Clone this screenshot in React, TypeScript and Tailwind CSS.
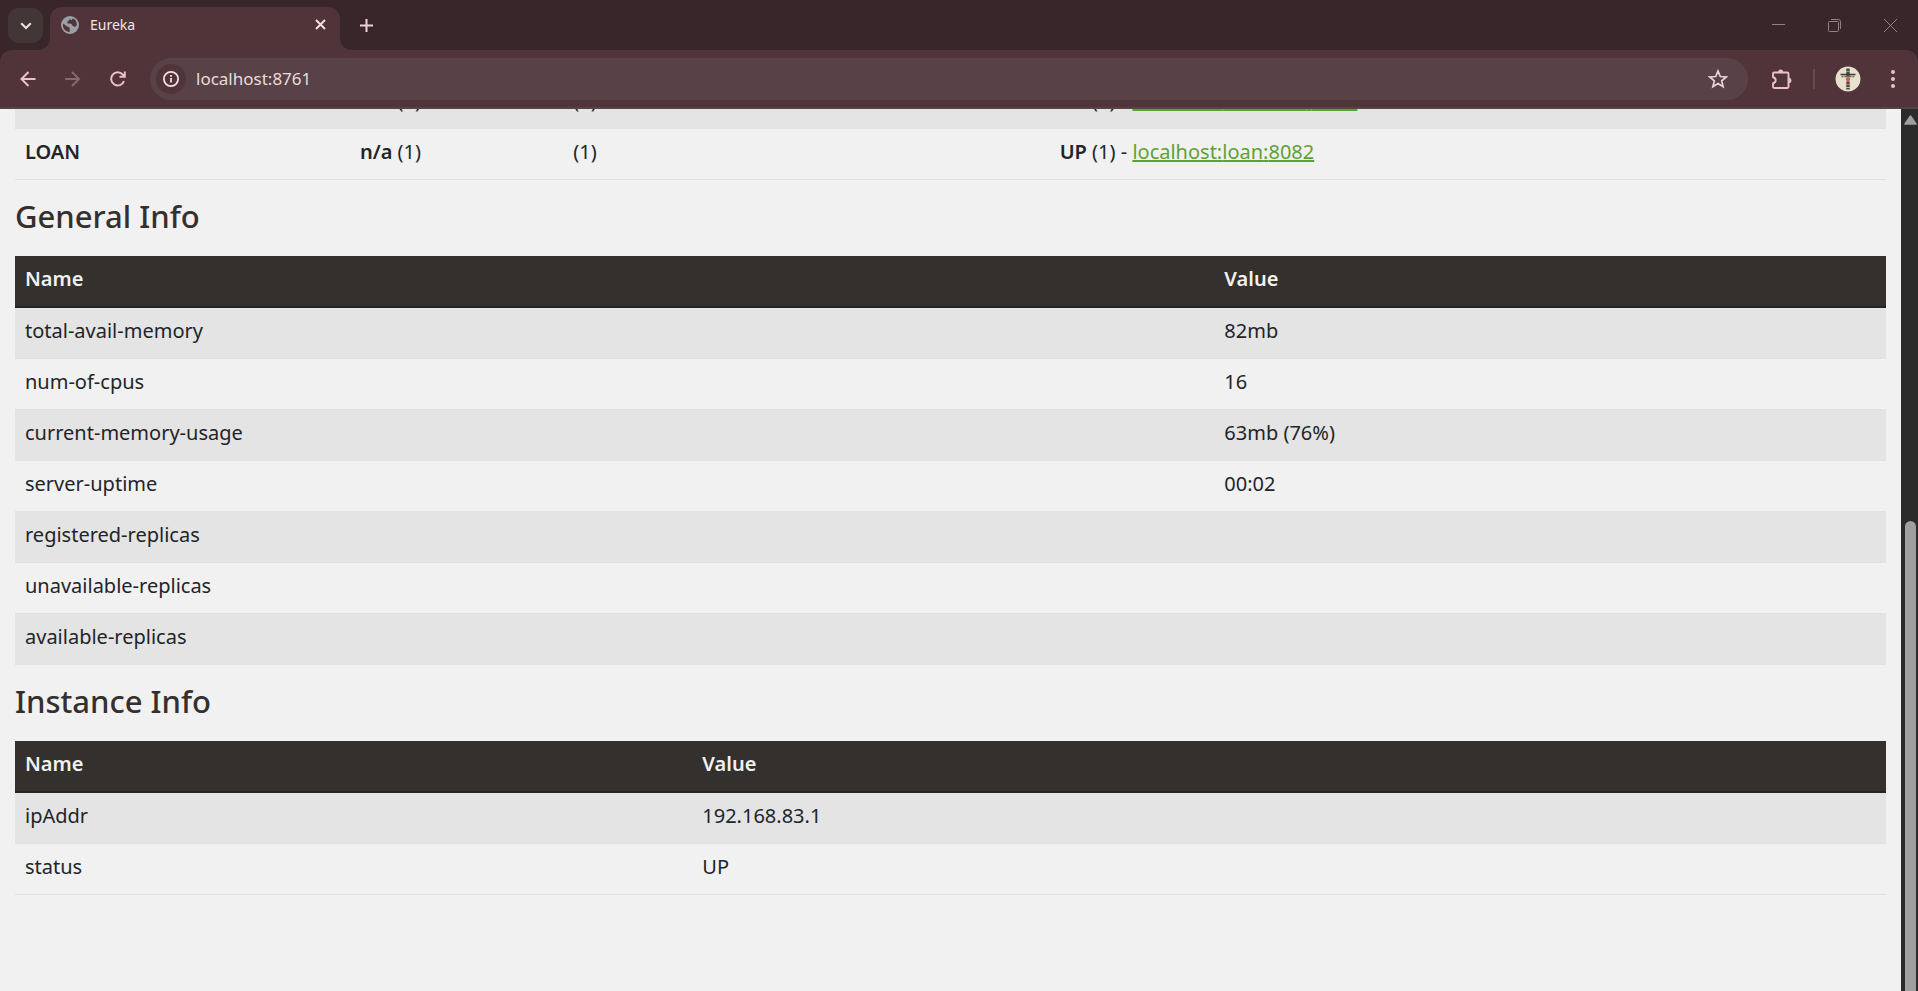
import type { ReactNode } from "react";

const generalInfo: [string, string][] = [
  ["total-avail-memory", "82mb"],
  ["num-of-cpus", "16"],
  ["current-memory-usage", "63mb (76%)"],
  ["server-uptime", "00:02"],
  ["registered-replicas", ""],
  ["unavailable-replicas", ""],
  ["available-replicas", ""],
];

const instanceInfo: [string, string][] = [
  ["ipAddr", "192.168.83.1"],
  ["status", "UP"],
];

function IconButton({ label, className = "", children }: { label: string; className?: string; children: ReactNode }) {
  return (
    <button type="button" aria-label={label} className={`flex shrink-0 items-center justify-center ${className}`}>
      {children}
    </button>
  );
}

function TabStrip() {
  return (
    <div className="flex h-[50px] items-end bg-[#38262a]">
      <div className="flex h-[50px] w-[50px] shrink-0 items-start pt-2 pl-2">
        <IconButton label="Search tabs" className="size-[35px] rounded-[11px] bg-[#433637]">
          <svg width="12" height="8" viewBox="0 0 12 8" fill="none" stroke="#f3dfe2" strokeWidth="2">
            <path d="M1.2 1.2 6 6l4.800-4.800" />
          </svg>
        </IconButton>
      </div>
      <div className="relative flex h-[43px] w-[290px] shrink-0 items-center rounded-t-xl bg-[#503439] pr-2 pb-2 pl-[11px]">
        <svg className="absolute bottom-0 -left-3" width="12" height="12" aria-hidden="true">
          <path d="M12 0v12H0A12 12 0 0 0 12 0Z" fill="#503439" />
        </svg>
        <svg className="absolute -right-3 bottom-0" width="12" height="12" aria-hidden="true">
          <path d="M0 0v12h12A12 12 0 0 1 0 0Z" fill="#503439" />
        </svg>
        <svg width="18" height="18" viewBox="0 0 18 18" aria-hidden="true">
          <circle cx="9" cy="9" r="9" fill="#9aa0a6" />
          <path d="M2 7.500l4.500 3.200c1.800.2 2.200 1 2.200 2v3.300C5 16 2 13 2 9.500ZM8 2.100c1 1 .5 2.400-1 2.900-.6.200 0 1.200-.8 1.600-.4.600.2 1 1.200.9 2.200-.1 3.600.5 4.100 2.200 1 .2 1.600.6 1.800 1.200.6.100 1.400-.3 2.500-1.600C16 5.500 14 3 11.500 2.500c.2 1-.5 1.800-1.500 1.500Z" fill="#503439" />
        </svg>
        <span className="ml-[11px] flex-1 text-[14px] text-[#f3e3e5]">Eureka</span>
        <IconButton label="Close tab" className="size-6">
          <svg width="11" height="11" viewBox="0 0 11 11" stroke="#f3dfe2" strokeWidth="2">
            <path d="m1 1 9 9M10 1l-9 9" />
          </svg>
        </IconButton>
      </div>
      <IconButton label="New tab" className="mb-3 ml-[13px] size-[26px]">
        <svg width="13" height="13" viewBox="0 0 13 13" stroke="#ecd3d8" strokeWidth="2">
          <path d="M6.500 0v13M0 6.500h13" />
        </svg>
      </IconButton>
      <div className="ml-auto flex h-[50px] items-center">
        <IconButton label="Minimize" className="h-[50px] w-14">
          <svg width="13" height="13" viewBox="0 0 13 13" stroke="#8f8284">
            <path d="M0 5.500h13" />
          </svg>
        </IconButton>
        <IconButton label="Restore" className="h-[50px] w-14">
          <svg width="13" height="13" viewBox="0 0 13 13" fill="none" stroke="#8f8284">
            <rect x=".5" y="2.500" width="10" height="10" rx="1" />
            <path d="M3 .5h7.500a2 2 0 0 1 2 2V10" />
          </svg>
        </IconButton>
        <IconButton label="Close" className="h-[50px] w-14">
          <svg width="13" height="13" viewBox="0 0 13 13" stroke="#8f8284">
            <path d="m0 0 13 13M13 0 0 13" />
          </svg>
        </IconButton>
      </div>
    </div>
  );
}

function Toolbar() {
  return (
    <div className="bg-[#38262a]">
      <div className="flex h-[59px] items-center rounded-t-xl border-b-2 border-[#584247] bg-[#503439]">
        <IconButton label="Back" className="ml-2 h-10 w-10">
          <svg width="16" height="16" viewBox="0 0 16 16" fill="none" stroke="#edbfc9" strokeWidth="2">
            <path d="M15.500 8H1.800M8.500 1l-7 7 7 7" />
          </svg>
        </IconButton>
        <IconButton label="Forward" className="ml-[5px] h-10 w-10">
          <svg width="16" height="16" viewBox="0 0 16 16" fill="none" stroke="#866870" strokeWidth="2">
            <path d="M0 8h13.700M7 1l7 7-7 7" />
          </svg>
        </IconButton>
        <IconButton label="Reload" className="ml-[5px] h-10 w-10">
          <svg width="16" height="16" viewBox="0 0 16 16" fill="none" stroke="#edbfc9" strokeWidth="2">
            <path d="M14 10.200A6.600 6.600 0 1 1 12.800 3.600l1.400 1.800M14.800.500v5.300H9.500" />
          </svg>
        </IconButton>
        <div className="ml-3 flex h-[42px] flex-1 items-center rounded-full bg-[#584247] pr-[18px] pl-[6px]">
          <IconButton label="View site information" className="size-[30px] rounded-full bg-[#503439]">
            <svg width="16" height="16" viewBox="0 0 16 16" fill="none" stroke="#f3dfe2" strokeWidth="1.800">
              <circle cx="8" cy="8" r="7.100" />
              <path d="M8 7v4.500M8 4v1.800" />
            </svg>
          </IconButton>
          <input
            aria-label="Address and search bar"
            defaultValue="localhost:8761"
            className="ml-[10px] min-w-0 flex-1 bg-transparent text-[17px] text-[#eadadd] outline-none"
          />
          <IconButton label="Bookmark this tab" className="size-6">
            <svg width="20" height="20" viewBox="0 0 20 20" fill="none" stroke="#ecd3d8" strokeWidth="1.700">
              <path d="m10 2 2.300 5.500 6 .5-4.600 3.900 1.400 5.800L10 14.600l-5.100 3.100 1.400-5.800L1.700 8l6-.5Z" />
            </svg>
          </IconButton>
        </div>
        <IconButton label="Extensions" className="ml-[23px] h-10 w-[22px]">
          <svg width="22" height="22" viewBox="0 0 22 22" fill="none" stroke="#edbfc9" strokeWidth="1.900" strokeLinejoin="round">
            <path d="M3.200 4.500H16.300a1.200 1.200 0 0 1 1.200 1.200V18.800a1.200 1.200 0 0 1-1.200 1.200H3.200A1.200 1.200 0 0 1 2 18.800V15.200c3.600-.8 3.600-5.200 0-6V5.700a1.200 1.200 0 0 1 1.200-1.200Z" />
            <path d="M7 4.200a2.600 2.600 0 0 1 5.200 0ZM17.800 9.800a2.600 2.600 0 0 1 0 5.200Z" fill="#edbfc9" stroke="none" />
          </svg>
        </IconButton>
        <div className="ml-5 h-5 w-[2px] bg-[#6b4b53]" />
        <IconButton label="Profile" className="ml-5 size-[26px] overflow-hidden rounded-full">
          <svg width="26" height="26" viewBox="0 0 26 26">
            <circle cx="13" cy="13" r="12.500" fill="#e9dfcd" />
            <path d="M13 2.500v10M13 15.500v8" stroke="#4a4946" strokeWidth="3.500" strokeDasharray="2.500 .6" />
            <path d="M5.500 8.500h15" stroke="#3c3b3b" strokeWidth="1.500" />
            <path d="M6.500 10.500h13" stroke="#6d6a66" strokeWidth="1.500" strokeDasharray="2 .7" />
            <path d="M13 16l-2-2c-.8-1.500 1-2.600 2-1.200 1-1.400 2.800-.3 2 1.200Z" fill="#ee4b3c" />
          </svg>
        </IconButton>
        <IconButton label="Menu" className="mr-[13px] ml-5 h-10 w-6">
          <svg width="4" height="18" viewBox="0 0 4 18" fill="#edbfc9">
            <circle cx="2" cy="2" r="2" />
            <circle cx="2" cy="9" r="2" />
            <circle cx="2" cy="16" r="2" />
          </svg>
        </IconButton>
      </div>
    </div>
  );
}

const bodyCell = "h-[51px] border-b border-[#dee2e6] px-[10px] pb-1";
const headCell = "h-[52px] border-b-2 border-[#212529] px-[10px] pb-1 font-semibold";

function InfoTable({ id, rows, nameWidth }: { id: string; rows: [string, string][]; nameWidth: string }) {
  return (
    <table aria-labelledby={id} className="w-full table-fixed border-separate border-spacing-0 text-left">
      <thead>
        <tr className="bg-[#34302d] text-[#f1f1f1]">
          <th className={`${nameWidth} ${headCell}`}>Name</th>
          <th className={headCell}>Value</th>
        </tr>
      </thead>
      <tbody>
        {rows.map(([name, value]) => (
          <tr key={name} className="odd:bg-[#e4e4e4]">
            <td className={bodyCell}>{name}</td>
            <td className={bodyCell}>{value}</td>
          </tr>
        ))}
      </tbody>
    </table>
  );
}

function AppRow({ name, instance, port }: { name?: string; instance: string; port: number }) {
  return (
    <tr className="odd:bg-[#e4e4e4]">
      <td className={`w-[17.900%] font-semibold ${bodyCell}`}>{name}</td>
      <td className={`w-[11.400%] ${bodyCell}`}>
        <b className="font-semibold">n/a</b> (1)
      </td>
      <td className={`w-[26%] ${bodyCell}`}>(1)</td>
      <td className={bodyCell}>
        <b className="font-semibold">UP</b> (1) -{" "}
        <a href="#" className="text-[#5fa134] underline decoration-2 underline-offset-1">
          localhost:{instance}:{port}
        </a>
      </td>
    </tr>
  );
}

function Scrollbar() {
  return (
    <div className="flex w-[17px] shrink-0 flex-col items-center bg-[#2b2b2b] pt-[6px] pl-[2px]" aria-hidden="true">
      <svg width="13" height="10" viewBox="0 0 13 10">
        <path d="M6.500 1 12 9H1Z" fill="#9f9f9f" stroke="#9f9f9f" strokeWidth="1.500" strokeLinejoin="round" />
      </svg>
      <div className="h-[396px] shrink-0" />
      <div className="w-[11px] flex-1 rounded-t-full bg-[#9f9f9f]" />
    </div>
  );
}

export default function App() {
  return (
    <div className="flex h-screen flex-col overflow-hidden bg-[#f1f1f1] font-['Noto_Sans',sans-serif]">
      <header className="shrink-0">
        <TabStrip />
        <Toolbar />
      </header>
      <div className="flex min-h-0 flex-1">
        <main className="min-w-0 flex-1 overflow-hidden px-[15px] text-[20px] text-[#212529]">
          <table
            aria-label="Instances currently registered"
            className="-mt-[31px] w-full table-fixed border-separate border-spacing-0 text-left"
          >
            <tbody>
              <AppRow instance="accounts" port={8080} />
              <AppRow name="LOAN" instance="loan" port={8082} />
            </tbody>
          </table>
          <h1 id="general" className="flex h-[76px] items-center pb-1 text-[31px] font-medium text-[#34302d]">
            General Info
          </h1>
          <InfoTable id="general" rows={generalInfo} nameWidth="w-[64.100%]" />
          <h1 id="instance" className="flex h-[76px] items-center pb-1 text-[31px] font-medium text-[#34302d]">
            Instance Info
          </h1>
          <InfoTable id="instance" rows={instanceInfo} nameWidth="w-[36.200%]" />
        </main>
        <Scrollbar />
      </div>
    </div>
  );
}
